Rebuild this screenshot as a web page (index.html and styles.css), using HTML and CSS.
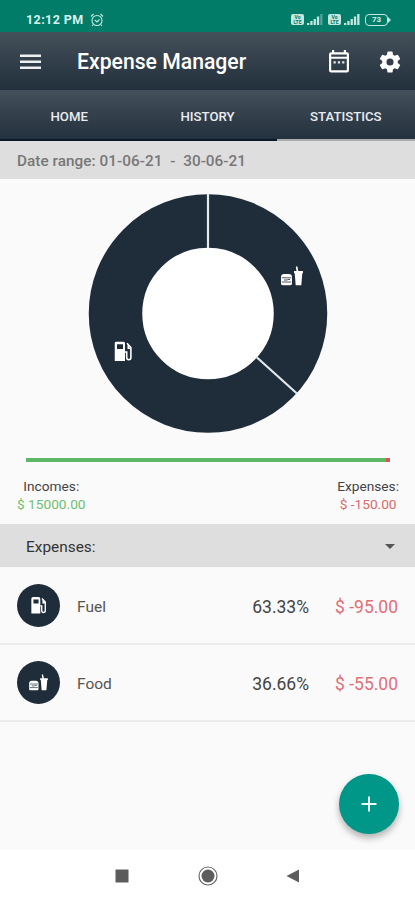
FILE: index.html
```html
<!DOCTYPE html>
<html lang="en">
<head>
    <meta charset="UTF-8">
    <meta name="viewport" content="width=device-width, initial-scale=1.0">
    <title>Expense Manager</title>
    <link rel="stylesheet" href="styles.css">
</head>
<body>
    <!-- shared category icons -->
    <svg class="defs" width="0" height="0">
        <symbol id="icon-fuel" viewBox="0 0 18 20">
            <path fill="#fff" fill-rule="evenodd" d="M2 0h6.500a2 2 0 0 1 2 2v17.500H0V2a2 2 0 0 1 2-2zM2.500 2.800v4.700h6V2.800z"/>
            <path fill="none" stroke="#fff" stroke-width="1.600" d="M10.500 10.500h1.700v5.500c0 3 4.200 3 4.200 0V6L12.500 1.800M13.800 3.500v3.300h2.600"/>
        </symbol>
        <symbol id="icon-food" viewBox="0 0 22 20">
            <path fill="#fff" d="M0 11c0-2 1.200-3 3-3h5c1.800 0 3 1 3 3v6.500c0 1-.6 1.700-1.700 1.700H1.700C.6 19.200 0 18.500 0 17.500z"/>
            <path stroke="#1f2d3a" stroke-width=".8" fill="none" d="M.8 11.800h9.400M3 14h3.500M6.500 13.500h2.500M.8 16h9.400"/>
            <path fill="#fff" d="M13 5h2.500L14.800.8l1.500-.5 1 4.700H22v2.200h-.7l-1 12h-5.600L13.700 7.200H13z"/>
        </symbol>
    </svg>

    <div class="screen">
        <div class="status-bar">
            <span class="time">12:12 PM</span>
            <svg class="alarm" width="14" height="14" viewBox="0 0 14 14" fill="none" stroke="#c9e9e1" stroke-width="1.100">
                <circle cx="7" cy="7.500" r="5"/>
                <path d="M4.800 7l2.200 2 2.500-2.500M1 3.500L3.500 1M13 3.500L10.500 1M3.300 11.500L2 13M10.700 11.500L12 13"/>
            </svg>
            <div class="status-icons">
                <span class="volte">Vo<br>LTE</span>
                <svg class="signal" width="16" height="11" viewBox="0 0 16 11" fill="#c4e6de">
                    <path d="M0 9h2.300v2H0zM3.300 7h2.300v4H3.300zM6.600 5h2.300v6H6.600zM9.900 2.500h2.300v8.500H9.900z"/>
                    <path opacity=".4" d="M13.200 0h2.300v11h-2.300z"/>
                </svg>
                <span class="volte">Vo<br>LTE</span>
                <svg class="signal" width="16" height="11" viewBox="0 0 16 11" fill="#c4e6de">
                    <path d="M0 9h2.300v2H0zM3.300 7h2.300v4H3.300zM6.600 5h2.300v6H6.600zM9.900 2.500h2.300v8.500H9.900zM13.200 0h2.300v11h-2.300z"/>
                </svg>
                <span class="battery">73</span>
                <span class="battery-tip"></span>
            </div>
        </div>

        <div class="toolbar">
            <svg class="menu" width="21" height="16" viewBox="0 0 21 16" fill="#eef1f3">
                <path d="M0 .5h21v2.400H0zM0 6.500h21v2.400H0zM0 12.500h21v2.400H0z"/>
            </svg>
            <h1>Expense Manager</h1>
            <svg class="calendar" width="20" height="23" viewBox="0 0 20 23">
                <path fill="#fff" fill-rule="evenodd" d="M3 0h2.200v2.300h9.600V0H17v2.300h.8A2.200 2.200 0 0 1 20 4.500v15.700a2.200 2.200 0 0 1-2.200 2.200H2.200A2.200 2.200 0 0 1 0 20.200V4.500a2.200 2.200 0 0 1 2.200-2.200H3zM2.200 4.500v2.200h15.600V4.500zM2.200 8.700v11.500h15.600V8.700z"/>
                <path fill="#dfe4e8" d="M4.500 11.200h2.300v2.200H4.500zM8.800 11.200h2.300v2.200H8.800zM13.100 11.200h2.300v2.200h-2.300z"/>
            </svg>
            <svg class="settings" width="26" height="26" viewBox="0 0 24 24">
                <path fill="#fff" d="M19.140 12.940c.04-.3.060-.61.060-.94s-.02-.64-.07-.94l2.030-1.580a.49.490 0 0 0 .12-.61l-1.920-3.320a.49.490 0 0 0-.59-.22l-2.390.96c-.5-.38-1.030-.7-1.620-.94l-.36-2.540a.48.480 0 0 0-.48-.41h-3.840a.47.470 0 0 0-.47.410l-.36 2.540c-.59.240-1.130.57-1.620.94l-2.390-.96a.48.480 0 0 0-.59.220L2.740 8.870a.48.480 0 0 0 .12.610l2.030 1.580c-.05.3-.09.63-.09.940s.02.640.070.940l-2.030 1.580a.49.490 0 0 0-.12.610l1.920 3.320c.12.220.37.290.59.220l2.390-.96c.5.380 1.030.7 1.620.940l.36 2.540c.05.240.24.410.48.410h3.840c.24 0 .44-.17.470-.41l.36-2.540c.59-.24 1.130-.56 1.620-.94l2.390.96c.22.080.47 0 .59-.22l1.920-3.320a.47.470 0 0 0-.12-.61zM12 15.300a3.300 3.300 0 1 1 0-6.600 3.300 3.300 0 0 1 0 6.600z"/>
            </svg>
        </div>

        <div class="tabs">
            <div class="tab">HOME</div>
            <div class="tab">HISTORY</div>
            <div class="tab active">STATISTICS</div>
        </div>

        <div class="date-range">Date range: 01-06-21 &nbsp;-&nbsp; 30-06-21</div>

        <div class="chart">
            <svg width="240" height="240" viewBox="0 0 240 240">
                <circle cx="120" cy="119.500" r="92.500" fill="#fff" stroke="#1f2d3a" stroke-width="53.500"/>
                <path stroke="#e3e8ec" stroke-width="2.200" d="M120 0v54M168.700 163.300l40.500 36.500"/>
                <use href="#icon-food" x="193" y="72" width="22" height="20"/>
                <use href="#icon-fuel" x="26.500" y="147.500" width="18" height="20"/>
            </svg>
        </div>

        <div class="balance-bar"><span class="spent"></span></div>

        <div class="summary">
            <div>
                <p>Incomes:</p>
                <p class="income">$ 15000.00</p>
            </div>
            <div>
                <p>Expenses:</p>
                <p class="expense">$ -150.00</p>
            </div>
        </div>

        <div class="selector">
            <span>Expenses:</span>
            <span class="arrow"></span>
        </div>

        <div class="list">
            <div class="row">
                <div class="badge"><svg width="16" height="17"><use href="#icon-fuel"/></svg></div>
                <span class="name">Fuel</span>
                <span class="percent">63.33%</span>
                <span class="amount">$ -95.00</span>
            </div>
            <div class="row">
                <div class="badge"><svg width="19" height="17"><use href="#icon-food"/></svg></div>
                <span class="name">Food</span>
                <span class="percent">36.66%</span>
                <span class="amount">$ -55.00</span>
            </div>
        </div>

        <div class="fab">
            <svg width="16" height="16" viewBox="0 0 16 16"><path stroke="#e8fffb" stroke-width="2" d="M8 .5v15M.5 8h15"/></svg>
        </div>

        <div class="nav-bar">
            <svg width="14" height="14"><path fill="#5c5c5c" d="M.5.500h13v13H.5z"/></svg>
            <svg width="20" height="20"><circle cx="10" cy="10" r="9" fill="none" stroke="#6a6a6a" stroke-width="1.200"/><circle cx="10" cy="10" r="6.500" fill="#5c5c5c"/></svg>
            <svg width="14" height="14"><path fill="#5c5c5c" d="M.5 7L13 .5v13z"/></svg>
        </div>
    </div>
</body>
</html>
```
FILE: styles.css
```css
* {
  box-sizing: border-box;
}
body {
  margin: 0;
  font-family: Roboto, Arial, sans-serif;
  background-color: #fafafa;
  color: #444;
}
h1, p {
  margin: 0;
}
svg {
  display: block;
  flex-shrink: 0;
}
.defs {
  position: absolute;
}
.screen {
  position: relative;
  width: 415px;
  height: 900px;
  display: flex;
  flex-direction: column;
  overflow: hidden;
}

/* status bar */
.status-bar {
  height: 32px;
  padding: 7px 24px 0 26px;
  background: #007c69;
  color: #d8f1eb;
  display: flex;
  align-items: center;
}
.time {
  font-size: 12.5px;
  font-weight: 700;
  letter-spacing: 0.4px;
}
.alarm {
  margin-left: 6px;
}
.status-icons {
  margin-left: auto;
  display: flex;
  align-items: center;
}
.volte {
  width: 13px;
  height: 11px;
  padding-top: 1px;
  border-radius: 2px;
  background: #c4e6de;
  color: #007c69;
  font-size: 5px;
  line-height: 5px;
  font-weight: 700;
  text-align: center;
}
.signal {
  margin: 0 5px 0 3px;
}
.battery {
  width: 23px;
  height: 12px;
  border: 1.5px solid #c4e6de;
  border-radius: 4px;
  font-size: 8px;
  line-height: 9px;
  font-weight: 700;
  text-align: center;
}
.battery-tip {
  border-left: 3px solid #c4e6de;
  border-top: 3px solid transparent;
  border-bottom: 3px solid transparent;
}

/* header */
.toolbar {
  height: 58px;
  padding: 1px 12px 0 20px;
  background: linear-gradient(#44505a, #22303d);
  display: flex;
  align-items: center;
}
.toolbar h1 {
  margin-left: 36px;
  font-size: 21.2px;
  font-weight: 500;
  color: #fff;
}
.calendar {
  margin-left: auto;
}
.settings {
  margin-left: 28px;
}
.tabs {
  height: 51px;
  background: linear-gradient(#44505a, #22303d);
  display: flex;
}
.tab {
  flex: 1;
  border-bottom: 2px solid #0b1a28;
  color: #e9edf0;
  font-size: 13.2px;
  font-weight: 500;
  line-height: 53px;
  text-align: center;
}
.tab.active {
  border-bottom-color: #a9abad;
}
.date-range {
  height: 38px;
  padding-left: 17px;
  background: #dedede;
  color: #777;
  font-size: 15.3px;
  font-weight: 500;
  line-height: 40px;
  letter-spacing: 0.05px;
}

/* chart */
.chart {
  padding-top: 15px;
  display: flex;
  justify-content: center;
}
.balance-bar {
  height: 4px;
  margin: 24px 25px 0 26px;
  background: #5cb862;
  display: flex;
  justify-content: flex-end;
}
.spent {
  width: 4px;
  background: #d9534f;
}
.summary {
  height: 62px;
  padding: 15px 16px 0 17px;
  display: flex;
  justify-content: space-between;
  font-size: 13.7px;
  line-height: 18px;
  text-align: center;
}
.income {
  color: #6fbf73;
}
.expense {
  color: #dd6a6a;
}
.selector {
  height: 43px;
  padding: 2px 20px 0 26px;
  background: #dedede;
  display: flex;
  justify-content: space-between;
  align-items: center;
  color: #333;
  font-size: 15.4px;
}
.arrow {
  border-top: 5px solid #555;
  border-left: 5px solid transparent;
  border-right: 5px solid transparent;
}

/* category list */
.list {
  padding-top: 1px;
}
.row {
  height: 77px;
  padding: 0 17px;
  border-bottom: 2px solid #ececec;
  display: flex;
  align-items: center;
}
.badge {
  width: 43px;
  height: 43px;
  border-radius: 50%;
  background: #1f2d3a;
  display: flex;
  justify-content: center;
  align-items: center;
}
.name {
  margin-left: 17px;
  padding-top: 2px;
  font-size: 15.5px;
  color: #555;
}
.percent {
  margin-left: auto;
  padding-top: 2px;
  font-size: 17.5px;
}
.amount {
  width: 89px;
  padding-top: 2px;
  font-size: 17.5px;
  text-align: right;
  color: #e07078;
}

.fab {
  position: absolute;
  right: 16px;
  bottom: 66px;
  width: 60px;
  height: 60px;
  border-radius: 50%;
  background: #009688;
  box-shadow: 0 4px 7px rgba(0, 0, 0, 0.3);
  display: flex;
  justify-content: center;
  align-items: center;
}
.nav-bar {
  height: 50px;
  margin-top: auto;
  padding: 1px 115px 0;
  background: #fff;
  display: flex;
  justify-content: space-between;
  align-items: center;
}
```
